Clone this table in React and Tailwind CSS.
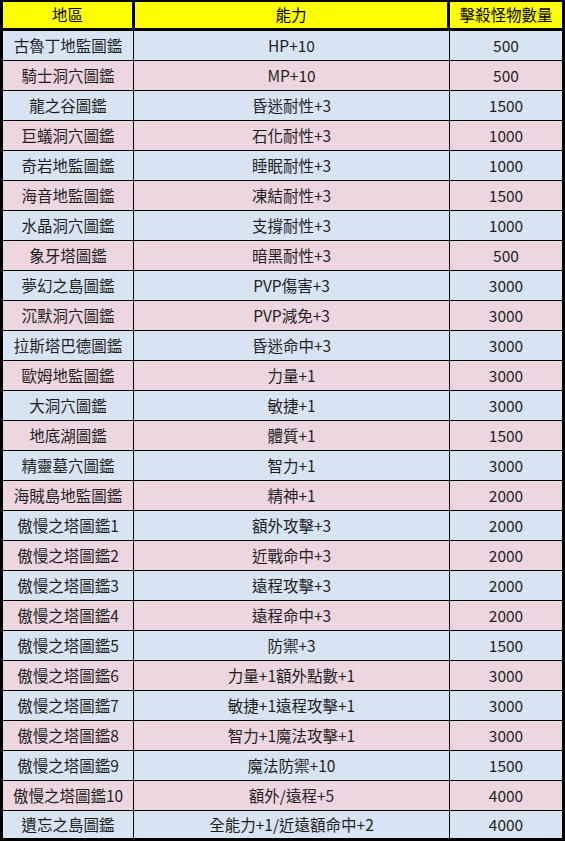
import React from "react";

const rows = [
  ["古魯丁地監圖鑑", "HP+10", "500"],
  ["騎士洞穴圖鑑", "MP+10", "500"],
  ["龍之谷圖鑑", "昏迷耐性+3", "1500"],
  ["巨蟻洞穴圖鑑", "石化耐性+3", "1000"],
  ["奇岩地監圖鑑", "睡眠耐性+3", "1000"],
  ["海音地監圖鑑", "凍結耐性+3", "1500"],
  ["水晶洞穴圖鑑", "支撐耐性+3", "1000"],
  ["象牙塔圖鑑", "暗黑耐性+3", "500"],
  ["夢幻之島圖鑑", "PVP傷害+3", "3000"],
  ["沉默洞穴圖鑑", "PVP減免+3", "3000"],
  ["拉斯塔巴德圖鑑", "昏迷命中+3", "3000"],
  ["歐姆地監圖鑑", "力量+1", "3000"],
  ["大洞穴圖鑑", "敏捷+1", "3000"],
  ["地底湖圖鑑", "體質+1", "1500"],
  ["精靈墓穴圖鑑", "智力+1", "3000"],
  ["海賊島地監圖鑑", "精神+1", "2000"],
  ["傲慢之塔圖鑑1", "額外攻擊+3", "2000"],
  ["傲慢之塔圖鑑2", "近戰命中+3", "2000"],
  ["傲慢之塔圖鑑3", "遠程攻擊+3", "2000"],
  ["傲慢之塔圖鑑4", "遠程命中+3", "2000"],
  ["傲慢之塔圖鑑5", "防禦+3", "1500"],
  ["傲慢之塔圖鑑6", "力量+1額外點數+1", "3000"],
  ["傲慢之塔圖鑑7", "敏捷+1遠程攻擊+1", "3000"],
  ["傲慢之塔圖鑑8", "智力+1魔法攻擊+1", "3000"],
  ["傲慢之塔圖鑑9", "魔法防禦+10", "1500"],
  ["傲慢之塔圖鑑10", "額外/遠程+5", "4000"],
  ["遺忘之島圖鑑", "全能力+1/近遠額命中+2", "4000"],
];

export default function App() {
  return (
    <div
      className="w-[565px] border-l-[3px] border-r-[3px] border-t-2 border-b-[3px] border-black text-[15.5px] text-[#1e1e1e]"
      style={{ fontFamily: '"Noto Sans CJK TC", "Noto Sans", sans-serif' }}
    >
      <div className="flex h-[29px] border-b-[3px] border-black bg-[#ffff00] text-black">
        <div className="w-[129px] flex items-center justify-center">地區</div>
        <div className="w-[3px] bg-black" />
        <div className="w-[312px] flex items-center justify-center">能力</div>
        <div className="w-[3px] bg-black" />
        <div className="w-[112px] flex items-center justify-center">擊殺怪物數量</div>
      </div>
      {rows.map((r, i) => {
        const last = i === rows.length - 1;
        const bg = i % 2 === 0 ? "bg-[#d8e4f2]" : "bg-[#ecd6df]";
        return (
          <div
            key={i}
            className={`flex ${bg} ${last ? "h-[27px]" : "h-[30px] border-b border-black"}`}
          >
            <div className="w-[130px] flex items-center justify-center leading-none">{r[0]}</div>
            <div className="w-px bg-black" />
            <div className="w-[315px] flex items-center justify-center leading-none">{r[1]}</div>
            <div className="w-px bg-black" />
            <div className="w-[112px] flex items-center justify-center leading-none">{r[2]}</div>
          </div>
        );
      })}
    </div>
  );
}
